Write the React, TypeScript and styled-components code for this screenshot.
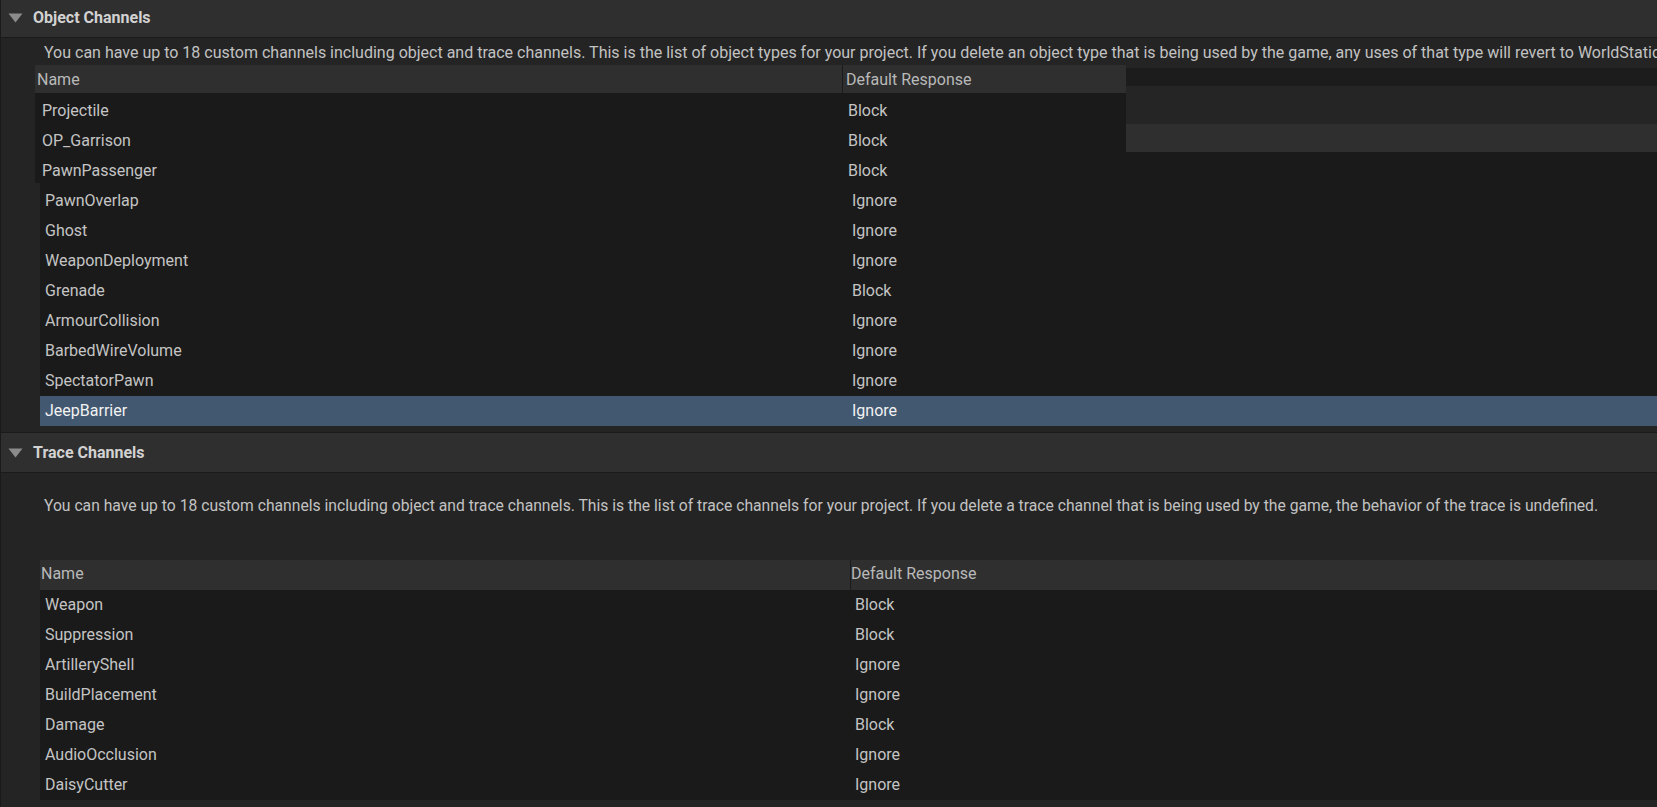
import React from 'react';
import styled, { createGlobalStyle } from 'styled-components';

const GlobalStyle = createGlobalStyle`
  html, body { margin: 0; padding: 0; background: #242424; }
  body { font-family: Roboto, "Liberation Sans", sans-serif; overflow: hidden; }
`;

const Page = styled.div`
  width: 1657px;
  height: 807px;
  box-sizing: border-box;
  border-left: 1px solid #1a1a1a;
  background: #242424;
  overflow: hidden;
  display: flex;
  flex-direction: column;
`;

const SectionHeader = styled.div<{ $h: number; $top?: boolean; $lift?: number }>`
  flex: none;
  box-sizing: content-box;
  height: ${p => p.$h - (p.$lift ?? 0)}px;
  padding-bottom: ${p => p.$lift ?? 0}px;
  display: flex;
  align-items: center;
  gap: 10px;
  padding-left: 7px;
  background: #2f2f2f;
  border-bottom: 1px solid #1b1b1b;
  ${p => (p.$top ? 'border-top: 1px solid #1b1b1b;' : '')}
`;

const Title = styled.span`
  font-size: 16px;
  font-weight: 700;
  color: #d2d2d2;
  line-height: 20px;
`;

const Section = styled.section<{ $pb?: number }>`
  display: flex;
  flex-direction: column;
  padding-bottom: ${p => p.$pb ?? 0}px;
`;

const Description = styled.div<{ $h: number; $pt: number; $fs: number }>`
  flex: none;
  box-sizing: border-box;
  height: ${p => p.$h}px;
  padding-top: ${p => p.$pt}px;
  padding-left: 43px;
  font-size: ${p => p.$fs}px;
  line-height: 20px;
  color: #c2c2c2;
  white-space: nowrap;
`;

const Stack = styled.div`
  display: grid;
  & > * {
    grid-area: 1 / 1;
  }
`;

const Layer = styled.div<{ $x: number; $w?: number }>`
  margin-left: ${p => p.$x}px;
  ${p => (p.$w ? `width: ${p.$w}px; align-self: start;` : '')}
  display: flex;
  flex-direction: column;
`;

const Band = styled.div<{ $h: number; $bg: string }>`
  height: ${p => p.$h}px;
  background: ${p => p.$bg};
`;

const TableBody = styled.div<{ $pt?: number }>`
  background: #1a1a1a;
  padding-top: ${p => p.$pt ?? 0}px;
`;

const HeaderRow = styled.div<{ $nameW: number; $h: number }>`
  display: grid;
  grid-template-columns: ${p => p.$nameW}px 1fr;
  height: ${p => p.$h}px;
  align-items: center;
  background: #2f2f2f;
  font-size: 16px;
  color: #b9b9b9;
  white-space: nowrap;
`;

const HeaderCell = styled.div<{ $pad: number; $divider?: boolean; $lift?: number }>`
  height: 100%;
  box-sizing: border-box;
  display: flex;
  align-items: center;
  padding-left: ${p => p.$pad}px;
  padding-bottom: ${p => p.$lift ?? 0}px;
  ${p => (p.$divider ? 'border-left: 1px solid #1b1b1b;' : '')}
`;

const Row = styled.div<{ $nameW: number; $selected?: boolean; $shift?: number }>`
  display: grid;
  grid-template-columns: ${p => p.$nameW}px 1fr;
  height: 30px;
  box-sizing: border-box;
  padding-top: ${p => p.$shift ?? 0}px;
  align-items: center;
  background: ${p => (p.$selected ? '#415870' : 'transparent')};
  color: ${p => (p.$selected ? '#f2f2f2' : '#c4c4c4')};
  font-size: 16px;
  line-height: 24px;
  white-space: nowrap;
`;

const Cell = styled.div<{ $pad: number }>`
  padding-left: ${p => p.$pad}px;
`;

const Triangle = () => (
  <svg width="15" height="10" viewBox="0 0 15 10">
    <polygon points="0.5,0.5 14.5,0.5 7.5,9.5" fill="#8b8b8b" />
  </svg>
);

type Item = [string, string];

const objTop: Item[] = [
  ['Projectile', 'Block'],
  ['OP_Garrison', 'Block'],
  ['PawnPassenger', 'Block'],
];

const objBack: Item[] = [
  ['PawnOverlap', 'Ignore'],
  ['Ghost', 'Ignore'],
  ['WeaponDeployment', 'Ignore'],
  ['Grenade', 'Block'],
  ['ArmourCollision', 'Ignore'],
  ['BarbedWireVolume', 'Ignore'],
  ['SpectatorPawn', 'Ignore'],
  ['JeepBarrier', 'Ignore'],
];

const trace: Item[] = [
  ['Weapon', 'Block'],
  ['Suppression', 'Block'],
  ['ArtilleryShell', 'Ignore'],
  ['BuildPlacement', 'Ignore'],
  ['Damage', 'Block'],
  ['AudioOcclusion', 'Ignore'],
  ['DaisyCutter', 'Ignore'],
];

const objDesc =
  'You can have up to 18 custom channels including object and trace channels. This is the list of object types for your project. If you delete an object type that is being used by the game, any uses of that type will revert to WorldStatic.';
const traceDesc =
  'You can have up to 18 custom channels including object and trace channels. This is the list of trace channels for your project. If you delete a trace channel that is being used by the game, the behavior of the trace is undefined.';

export default function App() {
  return (
    <>
      <GlobalStyle />
      <Page>
        <Section $pb={6}>
          <SectionHeader $h={37} $lift={2}>
            <Triangle />
            <Title>Object Channels</Title>
          </SectionHeader>
          <Description $h={27} $pt={5} $fs={16}>{objDesc}</Description>
          <Stack>
            <Layer $x={39}>
              <Band $h={3} $bg="#242424" />
              <Band $h={18} $bg="#1c1c1c" />
              <Band $h={38} $bg="#252525" />
              <Band $h={28} $bg="#2f2f2f" />
              <TableBody $pt={34}>
                {objBack.map(([n, v]) => (
                  <Row key={n} $nameW={807} $selected={n === 'JeepBarrier'}>
                    <Cell $pad={5}>{n}</Cell>
                    <Cell $pad={5}>{v}</Cell>
                  </Row>
                ))}
              </TableBody>
            </Layer>
            <Layer $x={34} $w={1091}>
              <HeaderRow $nameW={807} $h={28}>
                <HeaderCell $pad={2}>Name</HeaderCell>
                <HeaderCell $pad={3} $divider>Default Response</HeaderCell>
              </HeaderRow>
              <TableBody>
                {objTop.map(([n, v]) => (
                  <Row key={n} $nameW={807} $shift={6}>
                    <Cell $pad={7}>{n}</Cell>
                    <Cell $pad={6}>{v}</Cell>
                  </Row>
                ))}
              </TableBody>
            </Layer>
          </Stack>
        </Section>
        <Section>
          <SectionHeader $h={39} $top>
            <Triangle />
            <Title>Trace Channels</Title>
          </SectionHeader>
          <Description $h={87} $pt={23} $fs={15.7}>{traceDesc}</Description>
          <Layer $x={39}>
            <HeaderRow $nameW={810} $h={30}>
              <HeaderCell $pad={1} $lift={3}>Name</HeaderCell>
              <HeaderCell $pad={0} $lift={3} $divider>Default Response</HeaderCell>
            </HeaderRow>
            <TableBody>
              {trace.map(([n, v]) => (
                <Row key={n} $nameW={810}>
                  <Cell $pad={5}>{n}</Cell>
                  <Cell $pad={5}>{v}</Cell>
                </Row>
              ))}
            </TableBody>
          </Layer>
        </Section>
      </Page>
    </>
  );
}
